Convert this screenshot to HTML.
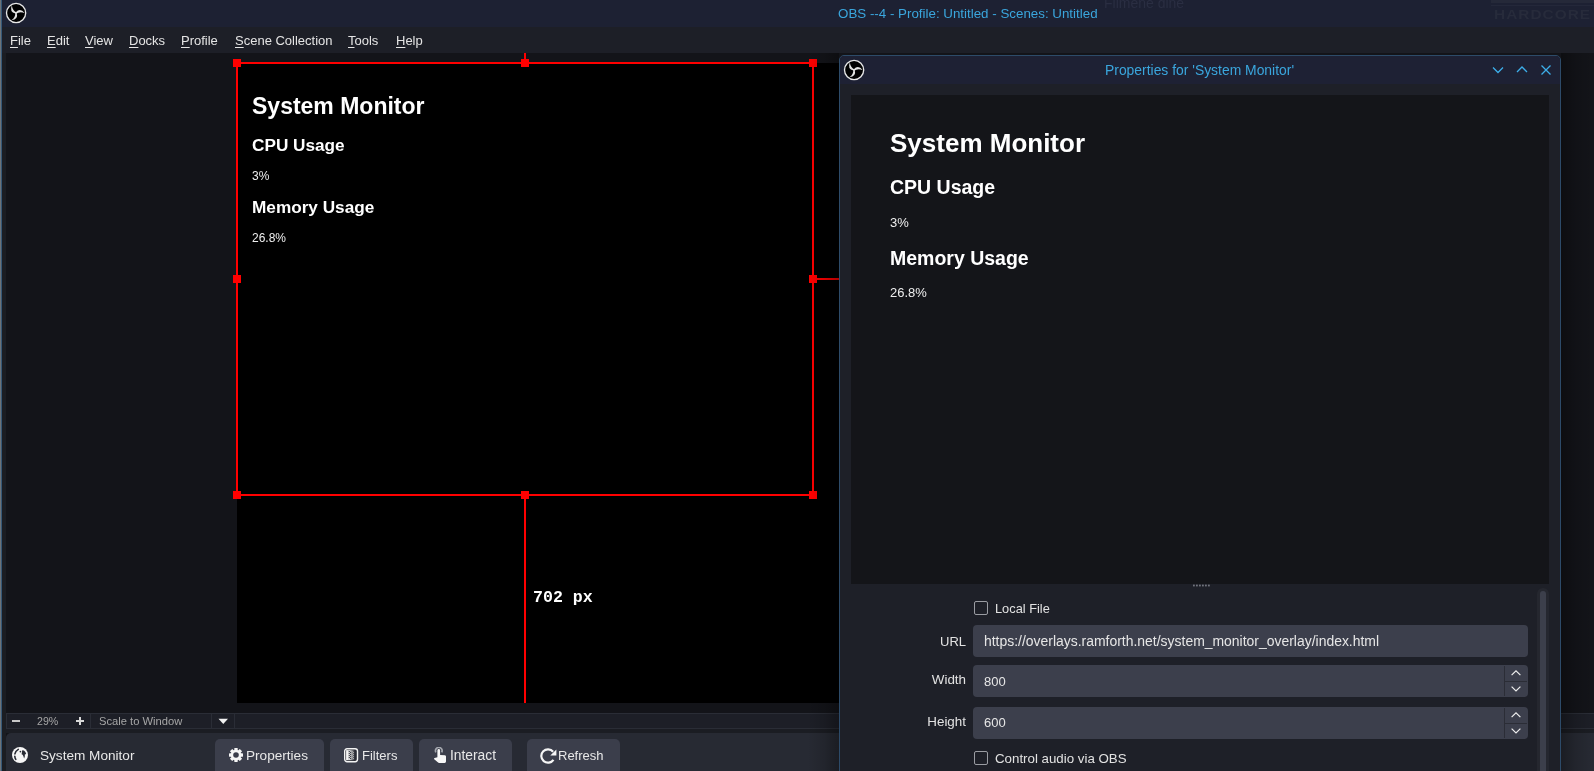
<!DOCTYPE html>
<html><head><meta charset="utf-8">
<style>
*{margin:0;padding:0;box-sizing:border-box}
html,body{width:1594px;height:771px;overflow:hidden;background:#131419;font-family:"Liberation Sans",sans-serif;color:#e6e6e6}
.a{position:absolute}
.t{position:absolute;line-height:1;white-space:nowrap;will-change:transform}
.red{position:absolute;background:#f00}
.h{position:absolute;width:8px;height:8px;background:#f00}
.menu .t{font-size:13px;color:#e4e4e4;top:33.9px}
.menu u{text-decoration:underline;text-underline-offset:2px;text-decoration-thickness:1px}
.btn{position:absolute;top:739px;height:40px;background:#3b3e4b;border-radius:5px}
.btn .t{top:10px;font-size:13px;color:#e8e8e8}
.inp{position:absolute;left:973px;width:555px;height:32px;background:#3c3f4c;border-radius:4px}
.lbl{position:absolute;font-size:13px;color:#e2e2e2;line-height:1;white-space:nowrap;will-change:transform}
.cb{position:absolute;left:974px;width:14px;height:14px;border:1px solid #9a9ca2;border-radius:2px}
</style></head><body>
<!-- title bar -->
<div class="a" style="left:0;top:0;width:1594px;height:27px;background:#1d2133"></div>
<div class="a" style="left:0;top:27px;width:1594px;height:26px;background:#1d1f27"></div>
<!-- main preview background -->
<div class="a" style="left:6px;top:53px;width:1588px;height:660px;background:#131419"></div>
<div class="a" style="left:0;top:0;width:1px;height:771px;background:#6d7378"></div>
<div class="a" style="left:1px;top:0;width:1px;height:771px;background:#355877"></div>
<div class="a" style="left:2px;top:53px;width:4px;height:718px;background:#1b1d22"></div>

<!-- faint ghost in title -->
<div class="t" style="left:1104px;top:-4px;font-size:14px;color:#2a2e42">Filmene dine</div>
<div class="t" style="left:1493.5px;top:8.4px;font-size:13.5px;font-weight:bold;letter-spacing:0.9px;color:#272b3b;transform:scaleX(1.14);transform-origin:0 0">HARDCORE</div>
<div class="a" style="left:1491px;top:0;width:103px;height:3px;background:#252939"></div>
<div class="a" style="left:1491px;top:5px;width:103px;height:1px;background:#24283a"></div>

<!-- title logo -->
<svg class="a" style="left:5px;top:2px" width="22" height="22" viewBox="0 0 22 22">
<circle cx="11.1" cy="11" r="9.6" fill="#000" stroke="#e8e8e8" stroke-width="1.35"/>
<g fill="#e4e4e4">
<path d="M10.8,10.2 Q15.2,5.4 19.8,11.2 Q15,8.9 10.8,11.9 Z"/>
<path d="M10.8,10.2 Q15.2,5.4 19.8,11.2 Q15,8.9 10.8,11.9 Z" transform="rotate(120 11 10.9)"/>
<path d="M10.8,10.2 Q15.2,5.4 19.8,11.2 Q15,8.9 10.8,11.9 Z" transform="rotate(240 11 10.9)"/>
</g>
</svg>
<div class="t" style="left:838px;top:6.9px;font-size:13.35px;color:#3aa6dd">OBS --4 - Profile: Untitled - Scenes: Untitled</div>

<div class="menu">
<span class="t" style="left:10px"><u>F</u>ile</span>
<span class="t" style="left:47px"><u>E</u>dit</span>
<span class="t" style="left:85px"><u>V</u>iew</span>
<span class="t" style="left:129px"><u>D</u>ocks</span>
<span class="t" style="left:181px"><u>P</u>rofile</span>
<span class="t" style="left:235px"><u>S</u>cene Collection</span>
<span class="t" style="left:348px"><u>T</u>ools</span>
<span class="t" style="left:396px"><u>H</u>elp</span>
</div>

<!-- canvas -->
<div class="a" style="left:237px;top:63px;width:610px;height:640px;background:#000"></div>

<!-- selection box -->
<div class="red" style="left:236px;top:62px;width:578px;height:2px"></div>
<div class="red" style="left:236px;top:494px;width:578px;height:2px"></div>
<div class="red" style="left:236px;top:62px;width:2px;height:434px"></div>
<div class="red" style="left:812px;top:62px;width:2px;height:434px"></div>
<div class="red" style="left:524px;top:53px;width:2px;height:8px"></div>
<div class="red" style="left:524px;top:496px;width:2px;height:207px"></div>
<div class="red" style="left:817px;top:278px;width:22px;height:2px"></div>
<div class="h" style="left:233px;top:59px"></div>
<div class="h" style="left:521px;top:59px"></div>
<div class="h" style="left:809px;top:59px"></div>
<div class="h" style="left:233px;top:275px"></div>
<div class="h" style="left:809px;top:275px"></div>
<div class="h" style="left:233px;top:491px"></div>
<div class="h" style="left:521px;top:491px"></div>
<div class="h" style="left:809px;top:491px"></div>

<div class="t" style="left:251.5px;top:95.2px;font-size:23px;font-weight:bold;color:#fff">System Monitor</div>
<div class="t" style="left:251.5px;top:136.6px;font-size:17.2px;font-weight:bold;color:#fff">CPU Usage</div>
<div class="t" style="left:251.5px;top:169.8px;font-size:12px;color:#eee">3%</div>
<div class="t" style="left:251.5px;top:198.6px;font-size:17.2px;font-weight:bold;color:#fff">Memory Usage</div>
<div class="t" style="left:251.5px;top:232px;font-size:12px;color:#eee">26.8%</div>
<div class="t" style="left:532.6px;top:590.2px;font-size:16.6px;font-weight:bold;font-family:'Liberation Mono',monospace;color:#fff">702 px</div>

<!-- zoom bar -->
<div class="a" style="left:6px;top:713px;width:1588px;height:16px;background:#1d1f27;border-top:1px solid #2a2d36;border-bottom:1px solid #2a2d36;border-left:1px solid #2a2d36"></div>
<div class="a" style="left:90px;top:714px;width:1px;height:14px;background:#2a2d36"></div>
<div class="a" style="left:211px;top:714px;width:1px;height:14px;background:#2a2d36"></div>
<div class="a" style="left:234px;top:714px;width:1px;height:14px;background:#2a2d36"></div>
<div class="a" style="left:12px;top:720px;width:8px;height:2px;background:#c8c8c8"></div>
<div class="t" style="left:37px;top:716px;font-size:10.6px;color:#a6a6a6">29%</div>
<div class="a" style="left:76px;top:720px;width:8px;height:2px;background:#d8d8d8"></div>
<div class="a" style="left:79px;top:717px;width:2px;height:8px;background:#d8d8d8"></div>
<div class="t" style="left:99px;top:716px;font-size:11.2px;color:#a6a6a6">Scale to Window</div>
<svg class="a" style="left:218px;top:718px" width="11" height="7" viewBox="0 0 11 7"><path d="M0.5,0.8 L10,0.8 L5.25,6 Z" fill="#f2f2f2"/></svg>
<div class="a" style="left:6px;top:729px;width:1588px;height:4px;background:#1b1d23"></div>

<!-- source toolbar -->
<div class="a" style="left:6px;top:733px;width:1588px;height:40px;background:#272a33;border-top-left-radius:5px"></div>
<svg class="a" style="left:12px;top:747px" width="16" height="16" viewBox="0 0 16 16">
<circle cx="8" cy="8" r="8" fill="#f6f6f6"/>
<g fill="none" stroke="#272a33" stroke-width="1.6" stroke-linecap="round"><path d="M6.3,2.4 Q3.3,4.2 2.9,6.9"/><path d="M2.8,9.2 Q2.9,11 3.8,12.4"/></g>
<circle cx="8.4" cy="4.6" r="0.85" fill="#272a33"/>
<path d="M10.2,3.2 L12,3.4 L13.4,5 L14.2,7 L12.8,7.4 L12.8,9.6 L12.1,11.4 L11.4,9.2 L10.6,7.8 L9.6,7.2 L9.9,5.4 Z" fill="#272a33"/>
</svg>
<div class="t" style="left:40px;top:748.8px;font-size:13.6px;color:#e8e8e8">System Monitor</div>

<div class="btn" style="left:215px;width:109px">
<svg class="a" style="left:14px;top:9px" width="14" height="14" viewBox="0 0 14 14">
<g fill="#f6f6f6"><circle cx="7" cy="7" r="5.2"/>
<rect x="5.3" y="0" width="3.4" height="14" rx="0.4"/>
<rect x="5.3" y="0" width="3.4" height="14" rx="0.4" transform="rotate(45 7 7)"/>
<rect x="5.3" y="0" width="3.4" height="14" rx="0.4" transform="rotate(90 7 7)"/>
<rect x="5.3" y="0" width="3.4" height="14" rx="0.4" transform="rotate(135 7 7)"/></g>
<circle cx="7" cy="7" r="2.8" fill="#3b3e4b"/>
</svg>
<span class="t" style="left:31px;font-size:13.6px">Properties</span>
</div>
<div class="btn" style="left:330px;width:83px">
<svg class="a" style="left:14px;top:9px" width="15" height="15" viewBox="0 0 15 15">
<defs><linearGradient id="fg" x1="0" x2="1" y1="0" y2="0"><stop offset="0" stop-color="#f4f4f4"/><stop offset="1" stop-color="#2a2c35"/></linearGradient></defs>
<rect x="0.7" y="0.7" width="12.8" height="13" rx="2.4" fill="#2a2c35" stroke="#f4f4f4" stroke-width="1.4"/>
<rect x="2.1" y="2.1" width="2.7" height="10.1" fill="#f6f6f6"/>
<rect x="4.8" y="2.1" width="6" height="10.1" fill="url(#fg)"/>
<g fill="#2a2c35"><rect x="4.8" y="3" width="1" height="1"/><rect x="4.8" y="5" width="1" height="1"/><rect x="4.8" y="7" width="1" height="1"/><rect x="4.8" y="9" width="1" height="1"/><rect x="5.9" y="4" width="1" height="1"/><rect x="5.9" y="6" width="1" height="1"/><rect x="5.9" y="8" width="1" height="1"/><rect x="5.9" y="10" width="1" height="1"/></g>
<g fill="#bcbcbc"><rect x="7.6" y="3" width="1" height="1"/><rect x="7.6" y="5" width="1" height="1"/><rect x="7.6" y="7" width="1" height="1"/><rect x="7.6" y="9" width="1" height="1"/><rect x="8.8" y="4" width="1" height="1"/><rect x="8.8" y="6" width="1" height="1"/><rect x="8.8" y="8" width="1" height="1"/><rect x="8.8" y="10" width="1" height="1"/></g>
</svg>
<span class="t" style="left:31.5px">Filters</span>
</div>
<div class="btn" style="left:419px;width:93px">
<svg class="a" style="left:13px;top:8px" width="16" height="17" viewBox="0 0 16 17">
<path d="M3.9,5.3 A3.3,3.3 0 1 1 9.7,5.3" fill="none" stroke="#a3a6ad" stroke-width="1.7"/>
<path fill="#f8f8f8" stroke="#3b3e4b" stroke-width="0.9" paint-order="stroke" d="M5.4,3.4 A1.35,1.35 0 0 1 8.1,3.4 L8.1,8 L13,8.2 Q14,8.4 14,9.4 L14,14.6 Q14,16 12.6,16 L7.2,16 Q6.4,16 5.8,15.3 L2.2,12.2 Q1.6,11.4 2.6,10.9 L5.4,10.2 Z"/>
</svg>
<span class="t" style="left:31px;font-size:13.8px">Interact</span>
</div>
<div class="btn" style="left:527px;width:93px">
<svg class="a" style="left:12.5px;top:8.5px" width="18" height="18" viewBox="0 0 18 18">
<path d="M13.13,3.69 A6.7,6.7 0 1 0 13.49,11.84" fill="none" stroke="#f6f6f6" stroke-width="2.2"/>
<path d="M16.4,1.4 L16.4,7.5 L10.3,7.5 Z" fill="#f6f6f6"/>
</svg>
<span class="t" style="left:31px">Refresh</span>
</div>

<!-- dialog shadow -->
<div class="a" style="left:1561px;top:53px;width:33px;height:718px;background:linear-gradient(90deg,rgba(0,0,0,0.32),rgba(0,0,0,0.12) 45%,rgba(0,0,0,0) 95%)"></div>

<div class="a" style="left:806px;top:53px;width:33px;height:718px;background:linear-gradient(270deg,rgba(0,0,0,0.32),rgba(0,0,0,0.12) 45%,rgba(0,0,0,0) 95%)"></div>
<!-- dialog -->
<div class="a" style="left:839px;top:55px;width:722px;height:730px;background:#1e2028;border:1px solid #2d4b69;border-radius:5px 5px 0 0"></div>
<div class="a" style="left:840px;top:56px;width:720px;height:28px;background:#1e2134;border-radius:4px 4px 0 0"></div>
<svg class="a" style="left:843px;top:59px" width="22" height="22" viewBox="0 0 22 22">
<circle cx="11.1" cy="11" r="9.6" fill="#000" stroke="#e8e8e8" stroke-width="1.35"/>
<g fill="#e4e4e4">
<path d="M10.8,10.2 Q15.2,5.4 19.8,11.2 Q15,8.9 10.8,11.9 Z"/>
<path d="M10.8,10.2 Q15.2,5.4 19.8,11.2 Q15,8.9 10.8,11.9 Z" transform="rotate(120 11 10.9)"/>
<path d="M10.8,10.2 Q15.2,5.4 19.8,11.2 Q15,8.9 10.8,11.9 Z" transform="rotate(240 11 10.9)"/>
</g>
</svg>
<div class="t" style="left:1105px;top:64.2px;font-size:13.9px;color:#3aa6dd">Properties for 'System Monitor'</div>
<svg class="a" style="left:1488px;top:62px" width="68" height="16" viewBox="0 0 68 16">
<g fill="none" stroke="#3daee9" stroke-width="1.3">
<path d="M5,5.5 L10,10.5 L15,5.5"/>
<path d="M29,10 L34,5 L39,10"/>
<path d="M53.5,3.5 L62.5,12.5 M62.5,3.5 L53.5,12.5"/>
</g>
</svg>

<!-- browser content -->
<div class="a" style="left:851px;top:95px;width:698px;height:489px;background:#141519"></div>
<div class="t" style="left:890px;top:130.2px;font-size:26px;font-weight:bold;color:#fff">System Monitor</div>
<div class="t" style="left:890px;top:177.7px;font-size:19.5px;font-weight:bold;color:#fff">CPU Usage</div>
<div class="t" style="left:890px;top:216px;font-size:13px;color:#eee">3%</div>
<div class="t" style="left:890px;top:248.5px;font-size:19.5px;font-weight:bold;color:#fff">Memory Usage</div>
<div class="t" style="left:890px;top:286px;font-size:13px;color:#eee">26.8%</div>

<!-- splitter dots -->
<svg class="a" style="left:1192px;top:584px" width="20" height="3" viewBox="0 0 20 3">
<g fill="#70737c"><rect x="1" y="0.6" width="1.8" height="1.8"/><rect x="4" y="0.6" width="1.8" height="1.8"/><rect x="7" y="0.6" width="1.8" height="1.8"/><rect x="10" y="0.6" width="1.8" height="1.8"/><rect x="13" y="0.6" width="1.8" height="1.8"/><rect x="16" y="0.6" width="1.8" height="1.8"/></g>
</svg>

<!-- scrollbar -->
<div class="a" style="left:1537px;top:588px;width:12px;height:200px;background:#25272f;border-radius:6px"></div>
<div class="a" style="left:1540px;top:591px;width:6px;height:200px;background:#3c3f4b;border-radius:3px"></div>

<!-- fields -->
<div class="cb" style="top:601px"></div>
<div class="lbl" style="left:994.5px;top:603.1px;font-size:12.8px">Local File</div>

<div class="lbl" style="left:940px;top:635px;width:26px;text-align:right">URL</div>
<div class="inp" style="top:625px"></div>
<div class="t" style="left:984px;top:635.2px;font-size:13.95px;color:#e6e6e6">https://overlays.ramforth.net/system_monitor_overlay/index.html</div>

<div class="lbl" style="left:900px;top:672.9px;width:66px;text-align:right;font-size:13.4px">Width</div>
<div class="inp" style="top:665px"></div>
<div class="t" style="left:984px;top:674.9px;font-size:13px;color:#e6e6e6">800</div>
<div class="a" style="left:1504px;top:666px;width:1px;height:30px;background:#2b2d36"></div>
<div class="a" style="left:1505px;top:681px;width:22px;height:1px;background:#2b2d36"></div>
<svg class="a" style="left:1510px;top:668px" width="12" height="26" viewBox="0 0 12 26">
<g fill="none" stroke="#eeeeee" stroke-width="1.2"><path d="M1.6,7.2 L6,2.8 L10.4,7.2"/><path d="M1.6,18.6 L6,23 L10.4,18.6"/></g>
</svg>

<div class="lbl" style="left:900px;top:715px;width:66px;text-align:right;font-size:13.4px">Height</div>
<div class="inp" style="top:707px"></div>
<div class="t" style="left:984px;top:716.4px;font-size:13px;color:#e6e6e6">600</div>
<div class="a" style="left:1504px;top:708px;width:1px;height:30px;background:#2b2d36"></div>
<div class="a" style="left:1505px;top:723px;width:22px;height:1px;background:#2b2d36"></div>
<svg class="a" style="left:1510px;top:710px" width="12" height="26" viewBox="0 0 12 26">
<g fill="none" stroke="#eeeeee" stroke-width="1.2"><path d="M1.6,7.2 L6,2.8 L10.4,7.2"/><path d="M1.6,18.6 L6,23 L10.4,18.6"/></g>
</svg>

<div class="cb" style="top:751px"></div>
<div class="lbl" style="left:994.5px;top:751.7px;font-size:13.3px">Control audio via OBS</div>

</body></html>
